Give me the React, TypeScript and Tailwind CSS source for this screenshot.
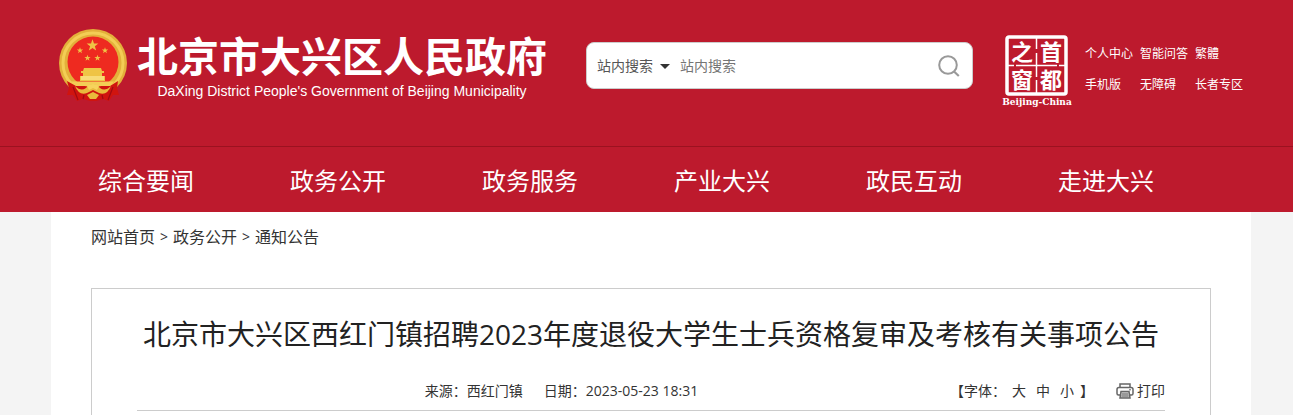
import React from 'react';
import { clsx } from 'clsx';

const NAV_ITEMS = ['综合要闻', '政务公开', '政务服务', '产业大兴', '政民互动', '走进大兴'];

const QUICK_LINKS = ['个人中心', '智能问答', '繁體', '手机版', '无障碍', '长者专区'];

const CRUMBS = ['网站首页', '政务公开', '通知公告'];

const FONT_SIZES = ['大', '中', '小'];

const STAR = 'M0 -10 L2.4 -3.2 L9.5 -3.1 L3.8 1.2 L5.9 8.1 L0 4 L-5.9 8.1 L-3.8 1.2 L-9.5 -3.1 L-2.4 -3.2 Z';

const Emblem: React.FC = () => (
  <svg viewBox="0 0 70 74" className="w-[70px] h-[74px] shrink-0" aria-hidden="true">
    <circle cx="35" cy="35" r="34" fill="#e3b03a" />
    <circle cx="35" cy="35" r="30" fill="none" stroke="#f3cd55" strokeWidth="3" />
    <circle cx="35" cy="34" r="25.500" fill="#ee2a20" />
    <g fill="#efc445">
      <path d={STAR} transform="translate(34.500 17.500) scale(.62)" />
      <path d={STAR} transform="translate(22 22.500) scale(.33)" />
      <path d={STAR} transform="translate(47 22.500) scale(.33)" />
      <path d={STAR} transform="translate(29.500 30) scale(.33)" />
      <path d={STAR} transform="translate(39.500 30) scale(.33)" />
      {/* Gate */}
      <path d="M26 40 H43 L44 43 H46 V45 H44 V48 H47 V53 H22 V48 H25 V45 H23 V43 H25 Z" />
      <path d="M23 48 H46 V52 H23 Z" fill="#f8dc78" />
      <path d="M13 53.500 H56 L53 58 H16 Z" fill="#f3cd55" />
    </g>
    {/* Ribbon */}
    <path d="M9 53 L18 58 L27 58 L35 61 L43 58 L52 58 L60 53 L59 60 L61 67 L55 67 L51 73 L45 71 L38 73 H32 L25 71 L19 73 L15 67 L9 67 L11 60 Z" fill="#d0140f" />
    <path d="M15 59 L20 72 M55 59 L50 72 M26 67 L25 71 M44 67 L45 71" stroke="#a00a12" strokeWidth="1.200" />
    <path d="M17 58 Q23 64 28 60 Q35 52 42 60 Q47 64 53 58 Q49 68 41 65 L35 62 L29 65 Q21 68 17 58 Z" fill="#e9b93c" />
    <path d="M29 58 Q35 54 41 58 L39 62 L35 60 L31 62 Z" fill="#f6d35c" />
    <path d="M29 67 L35 64 L41 67 L38 71 H32 Z" fill="#e9b93c" />
  </svg>
);

const CapitalWindow: React.FC = () => (
  <svg viewBox="0 0 70 72" className="w-[70px] h-[72px] shrink-0" role="img" aria-label="首都之窗">
    <rect x="5" y="2" width="59" height="57" rx="2" fill="none" stroke="#fff" strokeWidth="3.500" />
    <path d="M34.500 3 V14 M34.500 18 V42 M34.500 45 V58 M6 30.500 H12 M14 30.500 H55 M57 30.500 H63" stroke="#fff" strokeWidth="1.500" />
    <g
      fill="#fff"
      textAnchor="middle"
      fontSize="22"
      fontWeight="700"
      fontFamily="'Noto Sans CJK SC', sans-serif"
    >
      <text x="20" y="25">之</text>
      <text x="49" y="25">首</text>
      <text x="20" y="53">窗</text>
      <text x="49" y="53">都</text>
    </g>
    <text x="35" y="70" fill="#fff" textAnchor="middle" fontSize="9" fontWeight="700" fontFamily="'DejaVu Serif', serif">
      Beijing-China
    </text>
  </svg>
);

const SearchIcon: React.FC = () => (
  <svg viewBox="0 0 22 22" className="w-[22px] h-[22px]" fill="none" stroke="#999" strokeWidth="2" aria-hidden="true">
    <circle cx="10" cy="10" r="8.800" />
    <path d="M16 16.500 L20.800 21" strokeWidth="2.200" />
  </svg>
);

const PrintIcon: React.FC = () => (
  <svg viewBox="0 0 18 16" className="w-[18px] h-4" fill="none" stroke="#666" strokeWidth="1.500" aria-hidden="true">
    <path d="M4 4 V1 H14 V4" />
    <path d="M4 12 H2.500 Q1 12 1 10.500 V6.500 Q1 4.500 3 4.500 H15 Q17 4.500 17 6.500 V10.500 Q17 12 15.500 12 H14" />
    <path d="M5 8.500 H13 L14 15 H4 Z" fill="#ccc" />
    <path d="M6 11 H12 M5.500 13 H12.500" strokeWidth="1" />
    <path d="M13 6.800 H15" strokeWidth="1" />
  </svg>
);

const SearchBox: React.FC = () => (
  <form
    className="flex items-center w-[387px] h-[47px] ml-[39px] mt-[42px] pl-2.5 pr-3 bg-white border border-[#ccc] rounded-lg text-sm"
    onSubmit={(e) => e.preventDefault()}
  >
    <div className="relative shrink-0">
      <select aria-label="搜索范围" className="appearance-none block w-[73px] bg-transparent text-[#555] outline-none">
        <option>站内搜索</option>
      </select>
      <span className="absolute right-0 top-2 border-x-[5px] border-t-[5px] border-x-transparent border-t-[#333] pointer-events-none" />
    </div>
    <input
      type="text"
      aria-label="站内搜索"
      placeholder="站内搜索"
      className="flex-1 min-w-0 ml-2.5 bg-transparent outline-none placeholder:text-[#757575]"
    />
    <button type="submit" aria-label="搜索">
      <SearchIcon />
    </button>
  </form>
);

const Header: React.FC = () => (
  <header className="bg-[#bd1a2d] text-white">
    <div className="flex items-start h-[146px] pl-[58px]">
      <a href="#" className="flex items-start shrink-0 mt-7">
        <Emblem />
        <div className="ml-[9px] mt-1">
          <div className="text-[41px] leading-[48px] font-bold whitespace-nowrap">北京市大兴区人民政府</div>
          <div className="font-['Liberation_Sans'] text-sm leading-[22px] text-center whitespace-nowrap">
            DaXing District People's Government of Beijing Municipality
          </div>
        </div>
      </a>
      <SearchBox />
      <a href="#" className="ml-[29px] mt-[35px]">
        <CapitalWindow />
      </a>
      <div className="grid grid-cols-[55px_55px_auto] gap-y-[11px] ml-[13px] mt-11 text-xs leading-5 whitespace-nowrap">
        {QUICK_LINKS.map((label) => (
          <a key={label} href="#">{label}</a>
        ))}
      </div>
    </div>
    <nav className="flex h-[66px] pl-[50px] pr-[91px] border-t border-[#9b1220]">
      {NAV_ITEMS.map((label) => (
        <a key={label} href="#" className="flex-1 text-center text-2xl leading-[68px]">{label}</a>
      ))}
    </nav>
  </header>
);

const Article: React.FC = () => (
  <article className="flex-1 mt-[38px] border border-b-0 border-[#ccc] px-[45px] text-[#333]">
    <h1 className="mt-6 text-[28px] leading-[42px] text-center text-[#222] whitespace-nowrap">
      北京市大兴区西红门镇招聘2023年度退役大学生士兵资格复审及考核有关事项公告
    </h1>
    <div className="flex items-center mt-[25px] pb-2 border-b border-[#ccc] text-sm leading-[22px]">
      <div className="flex-1 flex justify-center gap-[21px] pl-9">
        <span>来源：西红门镇</span>
        <span>日期：2023-05-23 18:31</span>
      </div>
      <div className="flex items-center">
        <span>【字体：</span>
        {FONT_SIZES.map((size, i) => (
          <button key={size} type="button" className={clsx(i === 0 ? 'ml-1.5' : 'ml-2.5')}>{size}</button>
        ))}
        <span className="ml-1.5">】</span>
        <button type="button" className="flex items-center gap-[3px] ml-[22px]">
          <PrintIcon />
          打印
        </button>
      </div>
    </div>
  </article>
);

export default function App() {
  return (
    <div className="min-h-screen flex flex-col bg-[#f4f4f4] font-['Open_Sans','Noto_Sans_CJK_SC',sans-serif]">
      <Header />
      <main className="flex-1 flex flex-col ml-[51px] mr-[42px] px-10 bg-white">
        <div className="flex mt-[13px] mb-px gap-[5px] text-base leading-6 text-[#333]">
          {CRUMBS.map((label, i) => (
            <React.Fragment key={label}>
              {i > 0 && <span className="text-sm leading-6">&gt;</span>}
              <a href="#">{label}</a>
            </React.Fragment>
          ))}
        </div>
        <Article />
      </main>
    </div>
  );
}
